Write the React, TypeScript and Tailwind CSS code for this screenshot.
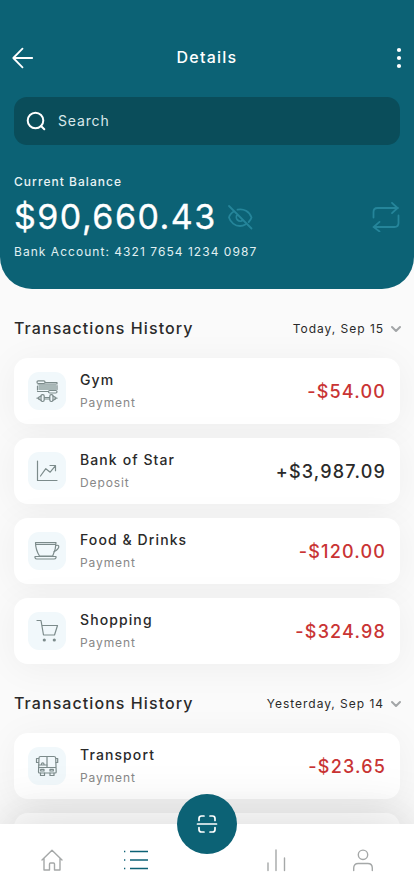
import React from "react";

type Kind = "gym" | "bank" | "food" | "shop" | "bus";

const Svg = ({ size, children, className = "", sw = 1 }: { size: number; children: React.ReactNode; className?: string; sw?: number }) => (
  <svg width={size} height={size} viewBox={`0 0 ${size} ${size}`} fill="none" stroke="currentColor" strokeWidth={sw} strokeLinecap="round" strokeLinejoin="round" className={`shrink-0 ${className}`}>
    {children}
  </svg>
);

// Category glyphs share a 38px tile.
const glyphs: Record<Kind, React.ReactNode> = {
  gym: (
    <>
      <path d="M10.500 12.500h17.500v5.500H10.500z" fill="#a9b8b8" stroke="none" />
      <path d="M17 10.500h12v1.500H10M29 13.500v4M9.500 14v4M9.500 19.500h12" />
      <rect x="9" y="8.800" width="8" height="2.700" rx="1.200" fill="#f1f8fb" />
      <rect x="20.500" y="18.500" width="8.500" height="2.500" rx="1.200" fill="#f1f8fb" />
      <path d="M16.500 25.500h5M16.500 27h5M9 26.200h2M27 26.200h2" />
      <rect x="13" y="22.700" width="3.200" height="6.800" rx="1.400" />
      <rect x="21.800" y="22.700" width="3.200" height="6.800" rx="1.400" />
      <path d="M13 24l-2.300 1.200v2L13 28.300M25 24l2.300 1.200v2L25 28.300" />
    </>
  ),
  bank: <path d="M9.500 9v19.500H29M12.500 24l5.300-7.300 4.400 3.500 5.300-6.500M22 13.500h5.500v5.200" />,
  food: (
    <>
      <path d="M7.500 10.500h20.500c0 5-1.300 9.500-3.300 13.500h-13.200C9 20 7.500 15.500 7.500 10.500zM8 12.300h19.500" />
      <path d="M28 13.500c3-1 3.500 1.200 2 3.200-1 1.500-2.500 2.300-4 3" />
      <path d="M7 24.500h21v1.200q-.5 1.300-2 1.300H9q-1.500 0-2-1.300z" />
    </>
  ),
  shop: (
    <>
      <path d="M9 8.500h4l2.500 14.500h11l3-9.500H14" />
      <circle cx="16.300" cy="28" r="1.600" fill="currentColor" stroke="none" />
      <circle cx="26.300" cy="28" r="1.600" fill="currentColor" stroke="none" />
    </>
  ),
  bus: (
    <>
      <path d="M12.500 9.500h13.500q1.500 0 1.700 1.500l.5 14q0 1-1 1H11.500q-1 0-1-1l.5-14q0-1.500 1.500-1.500zM10.500 20.500h17.500M19 9.500v11" />
      <path d="M10.500 11.500H8.500v4h2M28 11.500h1.700v4H28M13.500 18v-1q0-1.200 1.200-1.200T16 17v1M10.500 18H19" />
      <rect x="12.700" y="22.300" width="3.300" height="1.700" />
      <rect x="22" y="22.300" width="3.300" height="1.700" />
      <path d="M12.500 26v2.500h4V26M22 26v2.500h4V26" />
    </>
  ),
};

type Item = { kind: Kind; name: string; type: string; amount: string; plus?: boolean };

const today: Item[] = [
  { kind: "gym", name: "Gym", type: "Payment", amount: "-$54.00" },
  { kind: "bank", name: "Bank of Star", type: "Deposit", amount: "+$3,987.09", plus: true },
  { kind: "food", name: "Food & Drinks", type: "Payment", amount: "-$120.00" },
  { kind: "shop", name: "Shopping", type: "Payment", amount: "-$324.98" },
];
const yesterday: Item[] = [{ kind: "bus", name: "Transport", type: "Payment", amount: "-$23.65" }];

const cardClass = "h-[66px] shrink-0 rounded-[14px] bg-white shadow-[0_4px_36px_rgba(0,0,0,0.05)]";

function Row({ item }: { item: Item }) {
  return (
    <li className={`flex items-center pr-[14px] pl-[14px] ${cardClass}`}>
      <span className="flex size-[38px] shrink-0 items-center justify-center rounded-[11px] bg-[#f1f8fb] text-[#7c8b8b]">
        <Svg size={38} sw={1.2}>{glyphs[item.kind]}</Svg>
      </span>
      <div className="ml-[14px] flex flex-1 flex-col gap-[6px] pb-px">
        <span className="text-[14px] leading-[18px] font-medium tracking-[1.1px] text-[#2a2a2a]">{item.name}</span>
        <span className="text-[12px] leading-[16px] tracking-[0.9px] text-[#888]">{item.type}</span>
      </div>
      <span className={`pt-[2px] text-[18px] leading-6 font-medium tracking-[1.180px] ${item.plus ? "text-[#2a2a2a]" : "text-[#c93434]"}`}>{item.amount}</span>
    </li>
  );
}

function Section({ date, items, more }: { date: string; items: Item[]; more?: boolean }) {
  return (
    <section className="flex flex-col">
      <div className="flex h-6 items-center">
        <h2 className="flex-1 text-[16px] leading-6 font-medium tracking-[1.070px] text-[#2a2a2a]">Transactions History</h2>
        <span className="pt-px text-[12px] leading-4 tracking-[0.970px] text-[#2a2a2a]">{date}</span>
        <Svg size={12} sw={2} className="mt-px -mr-[2px] ml-[6px] text-[#a2a5a7]"><path d="M2 4l4 4 4-4" /></Svg>
      </div>
      <ul className="mt-[18px] flex flex-col gap-[14px]">
        {items.map((item) => <Row key={item.name} item={item} />)}
        {more && <li className={cardClass} />}
      </ul>
    </section>
  );
}

export default function App() {
  return (
    <div className="flex h-[896px] w-[414px] flex-col overflow-hidden bg-[#fafafa] font-['Inter','Liberation_Sans',sans-serif]">
      <header className="h-[289px] shrink-0 rounded-b-[32px] bg-[#0c6275] px-[14px] pt-[46px] text-white">
        <div className="flex h-6 items-center justify-between">
          <Svg size={22} sw={1.8} className="-ml-[2px]"><path d="M20.200 11H1.500M10.500 1.700L1.300 11l9.200 9.300" /></Svg>
          <h1 className="pb-[2px] text-[16px] leading-[22px] font-medium tracking-[1.25px]">Details</h1>
          <svg width="22" height="24" viewBox="0 0 22 24" fill="currentColor" className="-mr-[2px]">
            <circle cx="19" cy="4" r="2.100" /><circle cx="19" cy="12" r="2.100" /><circle cx="19" cy="20" r="2.100" />
          </svg>
        </div>
        <div className="mt-[27px] flex h-12 items-center rounded-[13px] bg-[#0a4d5a] pl-[12px]">
          <Svg size={20} sw={2}><circle cx="9.500" cy="9.500" r="7.800" /><path d="M15 15l3.300 3.300" /></Svg>
          <span className="ml-[12px] text-[14px] leading-5 tracking-[0.850px] text-[#d9e8eb]">Search</span>
        </div>
        <p className="mt-[29px] text-[12px] leading-4 font-medium tracking-[1.040px] text-[#e8f3f4]">Current Balance</p>
        <div className="mt-[5px] flex h-[44px] items-center justify-between">
          <div className="flex items-center">
            <span className="text-[34px] leading-[44px] tracking-[1.480px] [-webkit-text-stroke:0.3px_white]">$90,660.43</span>
            <Svg size={26} sw={1.8} className="ml-[10px] text-[#25859a]">
              <path d="M2 2l22.500 22.500M7.500 7.300C4.500 8.700 2.500 11 2 13.500c1.500 5 6 8.500 11 8.500 2 0 3.800-.5 5.300-1.500M10.500 5.700c6-1.500 12 1.800 14 7.800-.5 1.800-1.500 3.200-2.800 4.500M10.500 10.500c-1.500 1.500-1.500 4 0 5.500s4 1.500 5.500 0" />
            </Svg>
          </div>
          <Svg size={30} sw={1.8} className="text-[#25859a]">
            <path d="M3.500 15.500V10q0-4 4-4h20.500M22 .900l5.500 5.100-5.500 5.100M28.500 13.500V21q0 4-4 4H3.500M9.500 19.900L3.700 25l5.800 4.500" />
          </Svg>
        </div>
        <p className="mt-[5px] text-[12px] leading-4 tracking-[1.040px] text-[#e0f0f2]">Bank Account: 4321 7654 1234 0987</p>
      </header>
      <main className="flex min-h-0 flex-1 flex-col gap-[27px] overflow-hidden px-[14px] pt-[27px]">
        <Section date="Today, Sep 15" items={today} />
        <Section date="Yesterday, Sep 14" items={yesterday} more />
      </main>
      <nav className="relative flex h-[72px] shrink-0 items-center bg-white text-[#a5a8a8] shadow-[0_-2px_60px_rgba(0,0,0,0.16)]">
        <Svg size={24} sw={1.4} className="ml-[40px]"><path d="M2 12L12 2.300 22 12M4 10.500v11.500h5.500v-6q0-1 1-1h3q1 0 1 1v6H20V10.500" /></Svg>
        <svg width="26" height="24" viewBox="0 0 26 24" fill="none" stroke="#0c6275" strokeWidth="1.300" className="ml-[59px]">
          <path d="M7 3.500h18M7 12h18M7 20.500h18M1 3.500h1.300M1 12h1.300M1 20.500h1.300" />
        </svg>
        <button className="absolute -top-[30px] left-[177px] flex size-[60px] items-center justify-center rounded-full bg-[#0c6275] text-white">
          <Svg size={22} sw={1.700}><path d="M1.500 11h19M3 7.500V5.500Q3 3 5.500 3H8M14 3h2.500Q19 3 19 5.500v2M19 14.500v2Q19 19 16.500 19H14M8 19H5.500Q3 19 3 16.500v-2" /></Svg>
        </button>
        <Svg size={24} sw={1.400} className="ml-[115px]"><path d="M4 15v7.500M12 2v20.500M20.500 10v12.500" /></Svg>
        <Svg size={24} sw={1.400} className="ml-[63px]"><circle cx="12" cy="6.800" r="4.700" /><path d="M2.700 22.500v-2.500q0-4.500 4.500-4.500h9.600q4.500 0 4.500 4.500v2.500" /></Svg>
      </nav>
    </div>
  );
}
